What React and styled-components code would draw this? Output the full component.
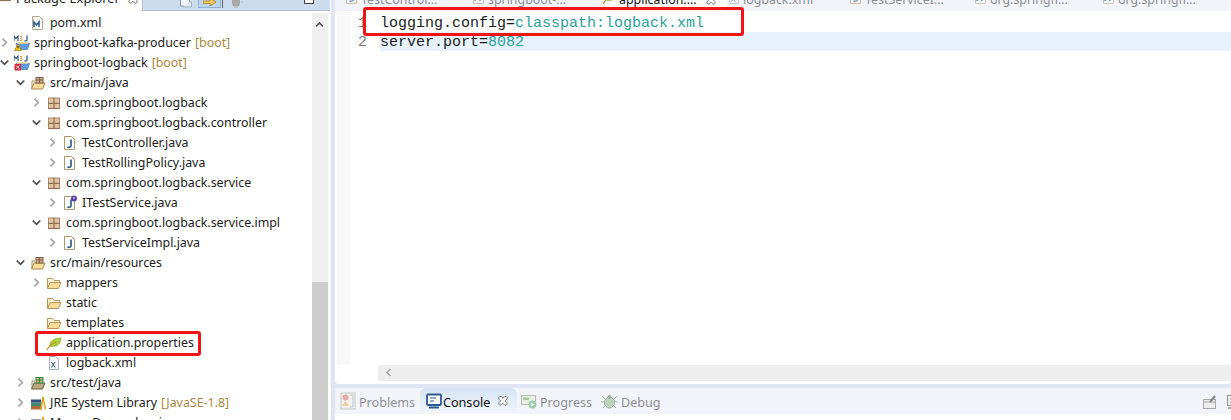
import React from "react";
import styled, { createGlobalStyle } from "styled-components";

const GlobalStyle = createGlobalStyle`
  html, body {
    margin: 0;
    padding: 0;
    height: 420px;
    overflow: hidden;
    background: #dfe5f3;
  }
  #root { height: 420px; }
`;

const Workbench = styled.div`
  display: flex;
  width: 1231px;
  height: 420px;
  overflow: hidden;
  background: #dfe5f3;
  font-family: "Noto Sans", "Noto Sans CJK SC", sans-serif;
  font-size: 12.4px;
  color: #1c1c1c;
`;

/* left column */
const ExplorerPane = styled.aside`
  width: 331px;
  flex: none;
  display: flex;
  flex-direction: column;
  background: #fff;
  overflow: hidden;
`;

const ExplorerTabs = styled.div`
  height: 11px;
  flex: none;
  display: flex;
`;

const ExplorerTab = styled.div`
  width: 142px;
  flex: none;
  display: flex;
  align-items: flex-start;
  overflow: hidden;
  white-space: nowrap;
  font-size: 12.8px;
`;

const ClippedText = styled.span`
  flex: none;
  line-height: 17px;
  margin-top: ${(p) => p.$offset}px;
`;

const ClippedIcon = styled.span`
  flex: none;
  display: flex;
  margin-top: ${(p) => p.$offset}px;
  margin-left: ${(p) => p.$left || 0}px;
  margin-right: ${(p) => p.$right || 0}px;
  opacity: ${(p) => (p.$faded ? 0.6 : 1)};
`;

const Toolbar = styled.div`
  flex: 1;
  margin-right: 1px;
  display: flex;
  align-items: flex-start;
  background: #ccdcec;
  border-left: 1px solid #b5bdd5;
  border-bottom: 1px solid #b5bdd5;
  padding-left: 37px;
  overflow: hidden;
`;

const ToolButton = styled.div`
  width: 23px;
  height: 8px;
  flex: none;
  margin-left: 6px;
  display: flex;
  justify-content: center;
  align-items: flex-end;
  box-sizing: border-box;
  background: #bcd4ee;
  border: 1px solid #8fb2da;
  border-top: none;
`;

const ToolSeparator = styled.div`
  width: 1px;
  height: 8px;
  flex: none;
  margin: 0 8px 0 1px;
  background: #5c6470;
`;

const ToolMinimize = styled.div`
  width: 10px;
  height: 4px;
  flex: none;
  margin-left: 61px;
  box-sizing: border-box;
  background: #fff;
  border: 1px solid #444;
  border-top: none;
`;

const ExplorerBody = styled.div`
  flex: 1;
  display: flex;
  min-height: 0;
`;

const Tree = styled.div`
  width: 312px;
  flex: none;
  padding-top: 2px;
  box-sizing: border-box;
`;

const Row = styled.div`
  display: flex;
  align-items: center;
  height: 20px;
  white-space: nowrap;
  position: relative;
  padding-left: ${(p) => p.$level * 16}px;

  ${(p) =>
    p.$outlined &&
    `&::after {
      content: "";
      position: absolute;
      left: 35px;
      top: -2px;
      width: 166px;
      height: 25px;
      box-sizing: border-box;
      border: 3px solid #f01414;
      border-radius: 3px;
    }`}
`;

const Twisty = styled.span`
  width: 14px;
  height: 16px;
  flex: none;
  display: flex;
  align-items: center;
`;

const NodeIcon = styled.span`
  width: 16px;
  height: 16px;
  flex: none;
  margin-right: 4px;
  display: flex;
`;

const Label = styled.span`
  padding-bottom: 1px;
`;

const Decoration = styled.span`
  color: #a9873f;
  margin-left: 4px;
  padding-bottom: 1px;
`;

const Scrollbar = styled.div`
  width: 16px;
  flex: none;
  margin-top: 2px;
  background: #f0f0f0;
  display: flex;
  flex-direction: column;
  align-items: center;
  padding-top: 7px;
  box-sizing: border-box;
  position: relative;
`;

const ScrollThumb = styled.div`
  position: absolute;
  left: 0;
  right: 0;
  top: 269px;
  bottom: 0;
  background: #cdcdcd;
`;

/* right column */
const RightColumn = styled.main`
  flex: 1;
  display: flex;
  flex-direction: column;
  min-width: 0;
  margin-left: 4px;
`;

const EditorTabs = styled.div`
  height: 11px;
  flex: none;
  display: flex;
  padding-left: 9px;
  background: #f3f4fa;
  overflow: hidden;
`;

const EditorTab = styled.div`
  width: ${(p) => p.$width}px;
  flex: none;
  display: flex;
  align-items: flex-start;
  height: 11px;
  overflow: hidden;
  white-space: nowrap;
  box-sizing: border-box;
  color: ${(p) => (p.$active ? "#111" : "#8d8f96")};
  background: ${(p) => (p.$active ? "#fff" : "transparent")};
`;

const Editor = styled.div`
  height: 373px;
  flex: none;
  display: flex;
  flex-direction: column;
  background: #fff;
  border-radius: 0 0 4px 4px;
  margin-bottom: 4px;
`;

const EditorBody = styled.div`
  flex: 1;
  display: flex;
  min-height: 0;
  padding-top: 1px;
`;

const Ruler = styled.div`
  width: 13px;
  flex: none;
  margin-left: 2px;
  background: #f8f8f8;
`;

const LineNumbers = styled.div`
  width: 17px;
  flex: none;
  padding-top: 2px;
  text-align: right;
  box-sizing: border-box;
  font-family: "Liberation Mono", monospace;
  font-size: 15px;
  line-height: 19px;
  color: #787878;
`;

const Code = styled.div`
  flex: 1;
  padding-top: 1px;
  margin-left: 13px;
  font-family: "Liberation Mono", monospace;
  font-size: 15px;
`;

const CodeLine = styled.div`
  height: 19px;
  line-height: 21px;
  white-space: pre;
  position: relative;
  background: ${(p) => (p.$current ? "#e8f2fe" : "transparent")};
`;

const Value = styled.span`
  color: #2aa198;
`;

const CodeOutline = styled.div`
  position: absolute;
  z-index: 1;
  left: -17px;
  top: -6px;
  width: 381px;
  height: 29px;
  border: 3px solid #f01414;
  border-radius: 3px;
  box-sizing: border-box;
`;

const HScroll = styled.div`
  height: 16px;
  flex: none;
  margin-left: 43px;
  background: #eeeeee;
  display: flex;
  align-items: center;
  padding-left: 6px;
`;

const HScrollGutter = styled.div`
  height: 3px;
  flex: none;
`;

const ConsoleTabs = styled.div`
  height: 26px;
  flex: none;
  display: flex;
  align-items: stretch;
  background: #f3f4fa;
`;

const ConsoleTab = styled.div`
  display: flex;
  align-items: center;
  flex: none;
  box-sizing: border-box;
  width: ${(p) => p.$width}px;
  padding-left: ${(p) => p.$pad}px;
  gap: ${(p) => (p.$active ? 1 : 3)}px;
  font-size: 12.6px;
  color: ${(p) => (p.$active ? "#111" : "#8d8f96")};
  background: ${(p) => (p.$active ? "linear-gradient(#d6e4f3, #f3f6fb)" : "transparent")};
  border-radius: ${(p) => (p.$active ? "6px 6px 0 0" : "0")};

  svg {
    flex: none;
    opacity: ${(p) => (p.$active ? 1 : 0.7)};
  }
`;

const TabLabel = styled.span`
  padding-top: 3px;
`;

const CloseSlot = styled.span`
  display: flex;
  margin-left: 7px;
`;

const ConsoleActions = styled.div`
  margin-left: auto;
  margin-right: -10px;
  margin-top: 7px;
  display: flex;
  gap: 10px;
`;

const ConsoleContent = styled.div`
  flex: 1;
  background: #fff;
`;

/* icons */
const chevronPaths = {
  open: "M.7 2.500 4.500 6.300 8.300 2.500",
  closed: "M2.500.7 6.300 4.500 2.500 8.300",
  up: "M1 6.500 4.500 3 8 6.500",
  left: "M6.500 1 3 4.500 6.500 8",
};

const Chevron = ({ dir, color }) => (
  <svg width="10" height="10" viewBox="0 0 10 10" fill="none" stroke={color || (dir === "open" ? "#4a4a4a" : "#a8a8a8")} strokeWidth="1.7">
    <path d={chevronPaths[dir]} />
  </svg>
);

const PackageIcon = () => (
  <svg width="16" height="16" viewBox="0 0 16 16">
    <rect x="2.500" y="3" width="11" height="10.500" fill="#e3c4a0" stroke="#a98a70" />
    <path d="M2 8.300h12M8 2.500v11.500" stroke="#8f6f58" strokeWidth="1.200" />
    <path d="M2.500 13.500h11" stroke="#8f6f58" strokeWidth="1.200" />
  </svg>
);

const FolderIcon = () => (
  <svg width="16" height="16" viewBox="0 0 16 16">
    <path d="M1.500 13V3.500h5l1.500 2h5.500V7" fill="#fff4d8" stroke="#b8955a" />
    <path d="M1.500 13.500 4 7.500h11l-2.500 6z" fill="#fbdc9a" stroke="#b8955a" />
  </svg>
);

const SourceFolderIcon = ({ muted }) => (
  <svg width="16" height="16" viewBox="0 0 16 16">
    <path d="M1.500 14 4 8h11l-2.500 6z" fill={muted ? "#b9a883" : "#fbdc9a"} stroke={muted ? "#6a5a3a" : "#a8874c"} />
    <path d="M2 13V6h3" fill="none" stroke="#a8874c" />
    <rect x="6" y="2.500" width="7" height="5.500" fill="#d9b48c" />
    <path d="M6 5h7M9.500 2.500V8" stroke={muted ? "#2f8a3a" : "#7d5f4a"} strokeWidth="1.200" />
    <rect x="6" y="2.500" width="7" height="5.500" fill="none" stroke={muted ? "#2f8a3a" : "#7d5f4a"} />
  </svg>
);

const JavaFileIcon = ({ iface }) => (
  <svg width="16" height="16" viewBox="0 0 16 16">
    <path d="M2.500 1.500h7l3 3v10h-10z" fill="#fff" stroke="#b0976a" />
    <path d="M9 4.500v6c0 2-2.500 2.300-3.500 1.200" fill="none" stroke="#2f5e94" strokeWidth="1.700" />
    {iface && <circle cx="12" cy="3.500" r="3" fill="#5d3f9e" />}
    {iface && <path d="M12 2v2" stroke="#fff" />}
  </svg>
);

const MavenFileIcon = () => (
  <svg width="16" height="16" viewBox="0 0 16 16">
    <path d="M2.500 1.500h7l3 3v10h-10z" fill="#fff" stroke="#b0a888" />
    <path d="M4 12V7l2.500 3L9 7v5" fill="none" stroke="#2f5e94" strokeWidth="1.600" />
  </svg>
);

const XmlFileIcon = () => (
  <svg width="16" height="16" viewBox="0 0 16 16">
    <path d="M3.500 1.500h6l3 3v10h-9z" fill="#f4f6fb" stroke="#a8b0c0" />
    <path d="M5.500 7l3.500 5.500M9 7l-3.500 5.500" stroke="#2f4e7e" />
  </svg>
);

const ProjectIcon = ({ badge }) => (
  <svg width="16" height="16" viewBox="0 0 16 16">
    <path d="M0 6V1l2 2.500L4 1v5" fill="none" stroke="#2f4e7e" strokeWidth="1.100" />
    <path d="M6 1.500h2l-1.500 2h1.500v2H6" fill="none" stroke="#c49a2a" strokeWidth=".8" />
    <path d="M13 .5v4c0 1.500-1.500 1.800-2.500 1" fill="none" stroke="#2f5e94" strokeWidth="1.300" />
    <path d="M2 8.500h13.500l-2 6H4z" fill="#5c9be0" stroke="#4a7fb8" strokeWidth=".7" />
    <path d="M3 8h11" stroke="#f0d08c" strokeWidth="1.500" />
    {badge === "warn" && <path d="M4 9l3.600 6.500H.4z" fill="#f5c518" stroke="#8a6a10" strokeWidth=".6" />}
    {badge === "warn" && <path d="M4 11v2.200" stroke="#222" />}
    {badge === "error" && <rect x=".5" y="9" width="6.500" height="6.500" fill="#d8263c" />}
    {badge === "error" && <path d="M2 10.500l3.500 3.500M5.500 10.500 2 14" stroke="#fff" />}
  </svg>
);

const LeafIcon = () => (
  <svg width="16" height="16" viewBox="0 0 16 16">
    <path d="M4 11C3 6 8 3 15 3c0 5-3 9-9 8.500z" fill="#a9cf3c" stroke="#88a838" strokeWidth=".6" />
    <path d="M1 15c2-4 5-6.500 9-8" fill="none" stroke="#c98a2a" strokeWidth="1.300" />
  </svg>
);

const LibraryIcon = () => (
  <svg width="16" height="16" viewBox="0 0 16 16">
    <rect x="1" y="11" width="11" height="3.500" fill="#b5653a" />
    <rect x="1" y="7.500" width="11" height="3.500" fill="#3c8a6c" />
    <rect x="1" y="4.500" width="10" height="3" fill="#2f4e7e" />
    <path d="M11 14.500 13 2l2.500 12.500" fill="none" stroke="#e0a92a" strokeWidth="1.600" />
  </svg>
);

const ProblemsIcon = () => (
  <svg width="16" height="18" viewBox="0 0 16 18">
    <rect x="1" y="1" width="14" height="16" fill="#f3eee8" stroke="#b5b5b5" />
    <circle cx="5.500" cy="5.500" r="3" fill="#e58b8b" />
    <path d="M2 14l3.500-5L9 14z" fill="#eec27a" />
    <path d="M10 3h3v12h-3" fill="none" stroke="#a7b4c4" />
  </svg>
);

const ConsoleIcon = () => (
  <svg width="16" height="16" viewBox="0 0 16 16">
    <rect x="1" y="1.500" width="14" height="10.500" rx="1" fill="#fff" stroke="#2c5a94" strokeWidth="1.800" />
    <path d="M4 5h6M4 8h4" stroke="#2c5a94" strokeWidth="1.200" />
    <path d="M3 14.500h10" stroke="#2c5a94" strokeWidth="2" />
  </svg>
);

const ProgressIcon = () => (
  <svg width="16" height="16" viewBox="0 0 16 16">
    <rect x=".5" y="2.500" width="14" height="9" fill="#e8ecd8" stroke="#9fa89a" />
    <rect x="2" y="4.500" width="6" height="2.500" fill="#8cb37a" />
    <circle cx="11.500" cy="11.500" r="4" fill="#7fbf8c" />
    <path d="M10.300 9.500v4l3-2z" fill="#fff" />
  </svg>
);

const DebugIcon = () => (
  <svg width="17" height="17" viewBox="0 0 17 17">
    <path d="M1 3l3 3M16 3l-3 3M0 9h3M14 9h3M2 15l3-3M15 15l-3-3" stroke="#8f9a92" />
    <ellipse cx="8.500" cy="9.500" rx="5" ry="5.500" fill="#a9c8a4" stroke="#7c9080" />
    <circle cx="8.500" cy="4" r="2" fill="#7c9080" />
  </svg>
);

const CloseX = ({ color = "#6b6b6b" }) => (
  <svg width="10" height="10" viewBox="0 0 11 11" fill="#fff" stroke={color}>
    <path d="M1 1.500 2 .5h1.500l2 2 2-2H9l1 1v1.500l-2 2.500 2 2V9l-1 1H7.500l-2-2-2 2H2L1 9V7.500l2-2-2-2z" />
  </svg>
);

const PinIcon = () => (
  <svg width="14" height="14" viewBox="0 0 14 14">
    <rect x=".5" y="4.500" width="12" height="9" fill="#eee" stroke="#a8a8a8" />
    <path d="M.5 7h12" stroke="#a8a8a8" />
    <path d="M7 7l5-6" stroke="#8a8a8a" strokeWidth="2.200" />
  </svg>
);

const MonitorIcon = () => (
  <svg width="14" height="14" viewBox="0 0 14 14">
    <rect x=".5" y=".5" width="13" height="10" fill="#eee" stroke="#8f8f8f" />
    <path d="M3 4h6M3 7h4" stroke="#8f8f8f" />
    <path d="M1 13h12" stroke="#8f8f8f" strokeWidth="1.500" />
  </svg>
);

const PageGlyph = () => (
  <svg width="12" height="8" viewBox="0 0 12 8">
    <rect x=".5" y="-4" width="9" height="10" fill="#f2f5f9" stroke="#8b98a8" />
    <path d="M9.500 2h2v5h-8V6" fill="#e3e8ee" stroke="#a8b2be" />
  </svg>
);

const ArrowGlyph = () => (
  <svg width="14" height="7" viewBox="0 0 14 7">
    <path d="M0 1h7V-2l6 4-6 4V3.500H0z" fill="#f5c95c" stroke="#a8802a" strokeWidth=".8" />
  </svg>
);

const BulbGlyph = () => (
  <svg width="12" height="8" viewBox="0 0 12 8">
    <path d="M1 0h8v3a4 4 0 0 1-8 0z" fill="#a8a8a8" />
    <path d="M3 6h4v2H3z" fill="#c0c0c0" />
    <path d="M10 2h2" stroke="#bbb" />
  </svg>
);

const rows = [
  { level: 1, icon: <MavenFileIcon />, label: "pom.xml" },
  { level: 0, twisty: "closed", icon: <ProjectIcon badge="warn" />, label: "springboot-kafka-producer", deco: "[boot]" },
  { level: 0, twisty: "open", icon: <ProjectIcon badge="error" />, label: "springboot-logback", deco: "[boot]" },
  { level: 1, twisty: "open", icon: <SourceFolderIcon />, label: "src/main/java" },
  { level: 2, twisty: "closed", icon: <PackageIcon />, label: "com.springboot.logback" },
  { level: 2, twisty: "open", icon: <PackageIcon />, label: "com.springboot.logback.controller" },
  { level: 3, twisty: "closed", icon: <JavaFileIcon />, label: "TestController.java" },
  { level: 3, twisty: "closed", icon: <JavaFileIcon />, label: "TestRollingPolicy.java" },
  { level: 2, twisty: "open", icon: <PackageIcon />, label: "com.springboot.logback.service" },
  { level: 3, twisty: "closed", icon: <JavaFileIcon iface />, label: "ITestService.java" },
  { level: 2, twisty: "open", icon: <PackageIcon />, label: "com.springboot.logback.service.impl" },
  { level: 3, twisty: "closed", icon: <JavaFileIcon />, label: "TestServiceImpl.java" },
  { level: 1, twisty: "open", icon: <SourceFolderIcon />, label: "src/main/resources" },
  { level: 2, twisty: "closed", icon: <FolderIcon />, label: "mappers" },
  { level: 2, icon: <FolderIcon />, label: "static" },
  { level: 2, icon: <FolderIcon />, label: "templates" },
  { level: 2, icon: <LeafIcon />, label: "application.properties", outlined: true },
  { level: 2, icon: <XmlFileIcon />, label: "logback.xml" },
  { level: 1, twisty: "closed", icon: <SourceFolderIcon muted />, label: "src/test/java" },
  { level: 1, twisty: "closed", icon: <LibraryIcon />, label: "JRE System Library", deco: "[JavaSE-1.8]" },
  { level: 1, twisty: "closed", icon: <LibraryIcon />, label: "Maven Dependencies" },
];

const editorTabs = [
  { width: 127, icon: <JavaFileIcon />, label: "TestControl..." },
  { width: 131, icon: <MavenFileIcon />, label: "springboot-..." },
  { width: 124, icon: <LeafIcon />, label: "application....", active: true },
  { width: 122, icon: <XmlFileIcon />, label: "logback.xml" },
  { width: 125, icon: <JavaFileIcon />, label: "TestServiceI..." },
  { width: 128, icon: <MavenFileIcon />, label: "org.springfr..." },
  { width: 128, icon: <MavenFileIcon />, label: "org.springfr..." },
];

export default function App() {
  return (
    <Workbench>
      <GlobalStyle />
      <ExplorerPane>
        <ExplorerTabs>
          <ExplorerTab>
            <ClippedIcon $offset={-13} $left={-3} $right={3}>
              <PackageIcon />
            </ClippedIcon>
            <ClippedText $offset={-10}>Package Explorer</ClippedText>
            <ClippedIcon $offset={-6} $left={8}>
              <CloseX />
            </ClippedIcon>
          </ExplorerTab>
          <Toolbar>
            <PageGlyph />
            <ToolButton>
              <ArrowGlyph />
            </ToolButton>
            <ToolSeparator />
            <BulbGlyph />
            <ToolMinimize />
          </Toolbar>
        </ExplorerTabs>
        <ExplorerBody>
          <Tree>
            {rows.map((row) => (
              <Row key={row.label} $level={row.level} $outlined={row.outlined}>
                <Twisty>{row.twisty && <Chevron dir={row.twisty} />}</Twisty>
                <NodeIcon>{row.icon}</NodeIcon>
                <Label>{row.label}</Label>
                {row.deco && <Decoration>{row.deco}</Decoration>}
              </Row>
            ))}
          </Tree>
          <Scrollbar>
            <Chevron dir="up" color="#555" />
            <ScrollThumb />
          </Scrollbar>
        </ExplorerBody>
      </ExplorerPane>
      <RightColumn>
        <EditorTabs>
          {editorTabs.map((tab, i) => (
            <EditorTab key={i} $width={tab.width} $active={tab.active}>
              <ClippedIcon $offset={-11} $right={1} $faded={!tab.active}>
                {tab.icon}
              </ClippedIcon>
              <ClippedText $offset={-9}>{tab.label}</ClippedText>
              {tab.active && (
                <ClippedIcon $offset={-5} $left={9}>
                  <CloseX />
                </ClippedIcon>
              )}
            </EditorTab>
          ))}
        </EditorTabs>
        <Editor>
          <EditorBody>
            <Ruler />
            <LineNumbers>
              1<br />2
            </LineNumbers>
            <Code>
              <CodeLine>
                logging.config=<Value>classpath:logback.xml</Value>
                <CodeOutline />
              </CodeLine>
              <CodeLine $current>
                server.port=<Value>8082</Value>
              </CodeLine>
            </Code>
          </EditorBody>
          <HScroll>
            <Chevron dir="left" />
          </HScroll>
          <HScrollGutter />
        </Editor>
        <ConsoleTabs>
          <ConsoleTab $width={85} $pad={5}>
            <ProblemsIcon />
            <TabLabel>Problems</TabLabel>
          </ConsoleTab>
          <ConsoleTab $active $width={97} $pad={6}>
            <ConsoleIcon />
            <TabLabel>Console</TabLabel>
            <CloseSlot>
              <CloseX />
            </CloseSlot>
          </ConsoleTab>
          <ConsoleTab $width={80} $pad={4}>
            <ProgressIcon />
            <TabLabel>Progress</TabLabel>
          </ConsoleTab>
          <ConsoleTab $width={80} $pad={4}>
            <DebugIcon />
            <TabLabel>Debug</TabLabel>
          </ConsoleTab>
          <ConsoleActions>
            <PinIcon />
            <MonitorIcon />
          </ConsoleActions>
        </ConsoleTabs>
        <ConsoleContent />
      </RightColumn>
    </Workbench>
  );
}
